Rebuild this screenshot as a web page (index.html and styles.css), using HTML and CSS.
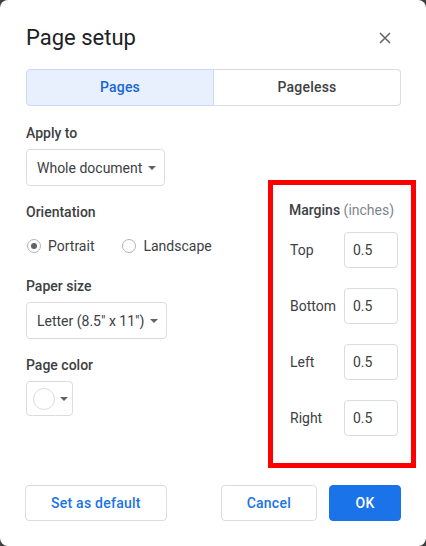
FILE: index.html
```html
<!DOCTYPE html>
<html>
<head>
<meta charset="utf-8">
<link rel="stylesheet" href="styles.css">
</head>
<body>
<div class="dialog">
  <div class="header">
    <div class="title">Page setup</div>
    <svg class="close" width="12" height="12" viewBox="0 0 12 12"><path d="M1 1L11 11M11 1L1 11" stroke="#5f6368" stroke-width="1.5" fill="none"/></svg>
  </div>
  <div class="tabs">
    <div class="tab active">Pages</div>
    <div class="tab">Pageless</div>
  </div>
  <div class="content">
    <div class="left">
      <div class="label l1">Apply to</div>
      <div class="select"><span>Whole document</span><svg class="caret" width="8" height="4" viewBox="0 0 8 4"><path d="M0 0H8L4 4Z" fill="#5f6368"/></svg></div>
      <div class="label l2">Orientation</div>
      <div class="radios">
        <div class="radio"><span class="ring checked"></span>Portrait</div>
        <div class="radio"><span class="ring"></span>Landscape</div>
      </div>
      <div class="label l3">Paper size</div>
      <div class="select"><span>Letter (8.5" x 11")</span><svg class="caret" width="8" height="4" viewBox="0 0 8 4"><path d="M0 0H8L4 4Z" fill="#5f6368"/></svg></div>
      <div class="label l4">Page color</div>
      <div class="colorbtn"><span class="swatch"></span><svg class="caret" width="8" height="4" viewBox="0 0 8 4"><path d="M0 0H8L4 4Z" fill="#5f6368"/></svg></div>
    </div>
    <div class="margins">
      <div class="mtitle"><b>Margins</b> <span class="unit">(inches)</span></div>
      <div class="mrow"><span class="mlabel">Top</span><div class="input">0.5</div></div>
      <div class="mrow"><span class="mlabel">Bottom</span><div class="input">0.5</div></div>
      <div class="mrow"><span class="mlabel">Left</span><div class="input">0.5</div></div>
      <div class="mrow"><span class="mlabel">Right</span><div class="input">0.5</div></div>
    </div>
  </div>
  <div class="footer">
    <div class="btn">Set as default</div>
    <div class="spacer"></div>
    <div class="btn">Cancel</div>
    <div class="btn primary">OK</div>
  </div>
</div>
</body>
</html>
```
FILE: styles.css
```css
* { box-sizing: border-box; }
html, body { margin: 0; padding: 0; }
body {
  background: #3f3f3f;
  font-family: Roboto, "Liberation Sans", sans-serif;
  color: #3c4043;
  width: 426px;
  height: 546px;
  overflow: hidden;
}
.dialog {
  width: 426px;
  height: 546px;
  background: #fff;
  border-radius: 8px;
  padding: 24px 25px 0 26px;
  display: flex;
  flex-direction: column;
}
.header {
  display: flex;
  align-items: center;
  justify-content: space-between;
  height: 28px;
}
.title {
  font-size: 22px;
  line-height: 28px;
  color: #202124;
}
.close { margin-right: 10px; }
.tabs {
  margin-top: 17px;
  display: flex;
  height: 37px;
}
.tab {
  flex: 1;
  display: flex;
  align-items: center;
  justify-content: center;
  font-size: 14px;
  font-weight: 500;
  letter-spacing: 0.2px;
  color: #3c4043;
  border: 1px solid #dadce0;
  border-left: none;
  border-radius: 0 4px 4px 0;
  padding-bottom: 2px;
}
.tab.active {
  background: #e8f0fe;
  color: #1967d2;
  border: 1px solid #c6dafc;
  border-radius: 4px 0 0 4px;
}
.content {
  display: flex;
  align-items: flex-start;
  margin-top: 17px;
}
.left {
  flex: 1;
  display: flex;
  flex-direction: column;
  align-items: flex-start;
}
.label {
  font-size: 14px;
  font-weight: 500;
  line-height: 20px;
  color: #3c4043;
}
.l1 { margin-top: 0; }
.l2 { margin-top: 16px; }
.l3 { margin-top: 20px; }
.l4 { margin-top: 16px; }
.select {
  margin-top: 6px;
  height: 37px;
  border: 1px solid #dadce0;
  border-radius: 4px;
  display: flex;
  align-items: center;
  padding: 0 8px 0 10px;
  font-size: 14px;
  color: #3c4043;
  gap: 6px;
  white-space: nowrap;
}
.radios {
  margin-top: 14px;
  display: flex;
  height: 20px;
  align-items: center;
}
.radio {
  display: flex;
  align-items: center;
  font-size: 14px;
  color: #3c4043;
  margin-right: 27px;
  white-space: nowrap;
}
.ring {
  width: 14px;
  height: 14px;
  border: 1px solid #b0b4b9;
  border-radius: 50%;
  margin: 0 7px 0 1px;
  display: flex;
  align-items: center;
  justify-content: center;
}
.ring.checked::after {
  content: "";
  width: 6px;
  height: 6px;
  border-radius: 50%;
  background: #5f6368;
}
.colorbtn {
  margin-top: 6px;
  width: 47px;
  height: 35px;
  border: 1px solid #dadce0;
  border-radius: 4px;
  display: flex;
  align-items: center;
  padding-left: 6px;
  gap: 5px;
}
.swatch {
  width: 22px;
  height: 22px;
  border: 1px solid #dadce0;
  border-radius: 50%;
}
.margins {
  margin-top: 57px;
  margin-right: -15px;
  width: 148px;
  flex: none;
  border: 5px solid #ff0000;
  padding: 15px 13px 27px 16px;
}
.mtitle {
  font-size: 14px;
  line-height: 20px;
  white-space: nowrap;
}
.mtitle b { font-weight: 500; color: #3c4043; }
.unit { color: #80868b; }
.mrow {
  display: flex;
  align-items: center;
  margin-top: 20px;
  height: 36px;
}
.mtitle + .mrow { margin-top: 12px; }
.mlabel {
  width: 55px;
  font-size: 14px;
  color: #3c4043;
  padding-left: 1px;
}
.input {
  width: 54px;
  height: 36px;
  border: 1px solid #dadce0;
  border-radius: 4px;
  display: flex;
  align-items: center;
  padding-left: 8px;
  font-size: 14px;
  color: #3c4043;
}
.footer {
  margin-top: 17px;
  display: flex;
  align-items: center;
  margin-left: -1px;
}
.spacer { flex: 1; }
.btn {
  height: 36px;
  padding: 0 25px;
  border: 1px solid #dadce0;
  border-radius: 4px;
  display: flex;
  align-items: center;
  justify-content: center;
  font-size: 14px;
  font-weight: 500;
  letter-spacing: 0.25px;
  color: #1a73e8;
  white-space: nowrap;
}
.btn.primary {
  margin-left: 12px;
  min-width: 72px;
  background: #1a73e8;
  border-color: #1a73e8;
  color: #fff;
}
```
